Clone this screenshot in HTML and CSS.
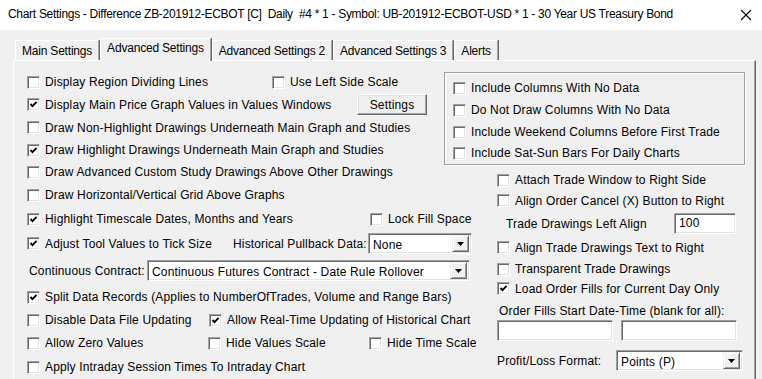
FILE: index.html
```html
<!DOCTYPE html>
<html lang="en">

<head>
  <meta charset="UTF-8">
  <title>Chart Settings</title>
  <link rel="stylesheet" href="styles.css">
</head>

<body>
  <div class="titlebar">
    <span class="titletext">Chart Settings - Difference ZB-201912-ECBOT [C]&nbsp; Daily&nbsp; #4 * 1 - Symbol: UB-201912-ECBOT-USD * 1 - 30 Year US Treasury Bond</span>
    <svg class="close" width="12" height="12" viewBox="0 0 12 12"><path d="M1 1 L11 11 M11 1 L1 11" stroke="#000" stroke-width="1.1" fill="none"/></svg>
  </div>

  <div class="tabs">
    <div class="tab">Main Settings</div>
    <div class="tab active">Advanced Settings</div>
    <div class="tab">Advanced Settings 2</div>
    <div class="tab">Advanced Settings 3</div>
    <div class="tab">Alerts</div>
  </div>

  <div class="panel">
    <!-- left column -->
    <div class="leftcol">
      <div class="row h22">
        <label class="chk w245"><span class="cb"></span>Display Region Dividing Lines</label>
        <label class="chk"><span class="cb"></span>Use Left Side Scale</label>
      </div>
      <div class="row h23">
        <label class="chk w330"><span class="cb"><svg viewBox="0 0 11 11"><path d="M2.5 5 L4.5 7.2 L8.6 2.8" /></svg></span>Display Main Price Graph Values in Values Windows</label>
        <div class="btn">Settings</div>
      </div>
      <div class="row h23">
        <label class="chk"><span class="cb"></span>Draw Non-Highlight Drawings Underneath Main Graph and Studies</label>
      </div>
      <div class="row h22">
        <label class="chk"><span class="cb"><svg viewBox="0 0 11 11"><path d="M2.5 5 L4.5 7.2 L8.6 2.8" /></svg></span>Draw Highlight Drawings Underneath Main Graph and Studies</label>
      </div>
      <div class="row h22">
        <label class="chk"><span class="cb"></span>Draw Advanced Custom Study Drawings Above Other Drawings</label>
      </div>
      <div class="row h24">
        <label class="chk"><span class="cb"></span>Draw Horizontal/Vertical Grid Above Graphs</label>
      </div>
      <div class="row h24">
        <label class="chk w343"><span class="cb"><svg viewBox="0 0 11 11"><path d="M2.5 5 L4.5 7.2 L8.6 2.8" /></svg></span>Highlight Timescale Dates, Months and Years</label>
        <label class="chk"><span class="cb"></span>Lock Fill Space</label>
      </div>
      <div class="row h25">
        <label class="chk w206"><span class="cb"><svg viewBox="0 0 11 11"><path d="M2.5 5 L4.5 7.2 L8.6 2.8" /></svg></span>Adjust Tool Values to Tick Size</label>
        <span class="lbl w135">Historical Pullback Data:</span>
        <div class="combo w104"><span class="val">None</span><span class="drop"><svg width="7" height="4" viewBox="0 0 7 4"><path d="M0 0 H7 L3.5 4 Z" fill="#000"/></svg></span></div>
      </div>
      <div class="row h29">
        <span class="lbl w120 pl2">Continuous Contract:</span>
        <div class="combo w323"><span class="val">Continuous Futures Contract - Date Rule Rollover</span><span class="drop"><svg width="7" height="4" viewBox="0 0 7 4"><path d="M0 0 H7 L3.5 4 Z" fill="#000"/></svg></span></div>
      </div>
      <div class="row h24">
        <label class="chk"><span class="cb"><svg viewBox="0 0 11 11"><path d="M2.5 5 L4.5 7.2 L8.6 2.8" /></svg></span>Split Data Records (Applies to NumberOfTrades, Volume and Range Bars)</label>
      </div>
      <div class="row h22">
        <label class="chk w182"><span class="cb"></span>Disable Data File Updating</label>
        <label class="chk"><span class="cb"><svg viewBox="0 0 11 11"><path d="M2.5 5 L4.5 7.2 L8.6 2.8" /></svg></span>Allow Real-Time Updating of Historical Chart</label>
      </div>
      <div class="row h24">
        <label class="chk w181"><span class="cb"></span>Allow Zero Values</label>
        <label class="chk w161"><span class="cb"></span>Hide Values Scale</label>
        <label class="chk"><span class="cb"></span>Hide Time Scale</label>
      </div>
      <div class="row h24">
        <label class="chk"><span class="cb"></span>Apply Intraday Session Times To Intraday Chart</label>
      </div>
    </div>

    <!-- right column -->
    <div class="rightcol">
      <div class="group">
        <label class="chk gr"><span class="cb"></span>Include Columns With No Data</label>
        <label class="chk gr"><span class="cb"></span>Do Not Draw Columns With No Data</label>
        <label class="chk gr"><span class="cb"></span>Include Weekend Columns Before First Trade</label>
        <label class="chk gr last"><span class="cb"></span>Include Sat-Sun Bars For Daily Charts</label>
      </div>

      <div class="trade">
        <div class="row h20">
          <label class="chk"><span class="cb"></span>Attach Trade Window to Right Side</label>
        </div>
        <div class="row h21">
          <label class="chk"><span class="cb"></span>Align Order Cancel (X) Button to Right</label>
        </div>
        <div class="row h25">
          <span class="lbl w177 pl9">Trade Drawings Left Align</span>
          <div class="field w62">100</div>
        </div>
        <div class="row h23">
          <label class="chk"><span class="cb"></span>Align Trade Drawings Text to Right</label>
        </div>
        <div class="row h20">
          <label class="chk"><span class="cb"></span>Transparent Trade Drawings</label>
        </div>
        <div class="row h19">
          <label class="chk"><span class="cb"><svg viewBox="0 0 11 11"><path d="M2.5 5 L4.5 7.2 L8.6 2.8" /></svg></span>Load Order Fills for Current Day Only</label>
        </div>
        <div class="caption">Order Fills Start Date-Time (blank for all):</div>
        <div class="fields">
          <div class="field w116"></div>
          <div class="field w116"></div>
        </div>
        <div class="row h21 pnl">
          <span class="lbl w119">Profit/Loss Format:</span>
          <div class="combo w127"><span class="val">Points (P)</span><span class="drop"><svg width="7" height="4" viewBox="0 0 7 4"><path d="M0 0 H7 L3.5 4 Z" fill="#000"/></svg></span></div>
        </div>
      </div>
    </div>
  </div>
</body>

</html>
```

FILE: styles.css
```css
body {
  margin: 0;
  background-color: #f0f0f0;
  font-family: "Liberation Sans", Arial, sans-serif;
  font-size: 12px;
  letter-spacing: 0.15px;
  color: #000;
  overflow: hidden;
}

.titlebar {
  height: 28px;
  background-color: #fff;
  display: flex;
  align-items: center;
  justify-content: space-between;
  padding: 0 10px 2px 8px;
}

.titletext {
  font-size: 12px;
  letter-spacing: -0.3px;
  white-space: nowrap;
}

.close {
  margin-top: 1px;
}

.tabs {
  display: flex;
  align-items: flex-end;
  margin-top: 7px;
  padding-left: 15px;
  height: 23px;
}

.tab {
  height: 20px;
  box-sizing: border-box;
  padding: 3px 6px 0 6px;
  border-top: 1px solid #fff;
  border-left: 1px solid #fff;
  border-right: 1px solid #a0a0a0;
  box-shadow: 1px 0 #696969;
  white-space: nowrap;
  letter-spacing: -0.2px;
  margin-right: 1px;
}

.tab.active {
  height: 23px;
  padding-top: 2px;
  margin-bottom: -1px;
  background-color: #f0f0f0;
  position: relative;
  z-index: 1;
}

.panel {
  margin-left: 13px;
  width: 743px;
  height: 321px;
  box-sizing: border-box;
  border-top: 1px solid #fff;
  border-left: 1px solid #fff;
  border-right: 1px solid #696969;
  box-shadow: inset -1px 0 #a0a0a0;
  display: flex;
  padding-left: 13px;
  overflow: hidden;
}

.leftcol {
  width: 417px;
  padding-top: 10px;
}

.rightcol {
  width: 301px;
  padding-top: 11px;
}

.row {
  display: flex;
  align-items: center;
  white-space: nowrap;
}

.h19 { height: 19px; }
.h20 { height: 20px; }
.h21 { height: 21px; }
.h22 { height: 22px; }
.h23 { height: 23px; }
.h24 { height: 24px; }
.h25 { height: 25px; }
.h29 { height: 29px; }

.chk {
  display: flex;
  align-items: center;
  white-space: nowrap;
  flex-shrink: 0;
}

.w62 { width: 62px; }
.w104 { width: 104px; }
.w116 { width: 116px; }
.w119 { width: 119px; }
.w120 { width: 120px; }
.w127 { width: 127px; }
.w135 { width: 135px; }
.w161 { width: 161px; }
.w177 { width: 177px; }
.w181 { width: 181px; }
.w182 { width: 182px; }
.w206 { width: 206px; }
.w245 { width: 245px; }
.w323 { width: 323px; }
.w330 { width: 330px; }
.w343 { width: 343px; }

.pl2 { padding-left: 2px; }
.pl9 { padding-left: 9px; }

.lbl {
  box-sizing: border-box;
  flex-shrink: 0;
}

.cb {
  width: 13px;
  height: 13px;
  box-sizing: border-box;
  background-color: #fff;
  border: 1px solid;
  border-color: #a0a0a0 #fff #fff #a0a0a0;
  box-shadow: inset 1px 1px #696969, inset -1px -1px #e3e3e3;
  margin-right: 5px;
  flex-shrink: 0;
  display: flex;
}

.cb svg {
  width: 11px;
  height: 11px;
}

.cb path {
  fill: none;
  stroke: #000;
  stroke-width: 1.9;
}

.btn {
  width: 70px;
  height: 21px;
  box-sizing: border-box;
  display: flex;
  align-items: center;
  justify-content: center;
  border: 1px solid;
  border-color: #fff #696969 #696969 #fff;
  box-shadow: inset -1px -1px #a0a0a0, inset 1px 1px #e3e3e3;
  background-color: #f0f0f0;
}

.combo {
  height: 21px;
  box-sizing: border-box;
  background-color: #fff;
  border: 1px solid;
  border-color: #a0a0a0 #fff #fff #a0a0a0;
  box-shadow: inset 1px 1px #696969, inset -1px -1px #e3e3e3;
  display: flex;
  align-items: center;
  justify-content: space-between;
  padding: 2px 2px 2px 4px;
  flex-shrink: 0;
}

.val {
  white-space: nowrap;
  overflow: hidden;
  padding-top: 2px;
}

.drop {
  width: 17px;
  height: 17px;
  box-sizing: border-box;
  background-color: #f0f0f0;
  border: 1px solid;
  border-color: #f0f0f0 #696969 #696969 #f0f0f0;
  box-shadow: inset 1px 1px #fff, inset -1px -1px #a0a0a0;
  display: flex;
  align-items: center;
  justify-content: center;
  flex-shrink: 0;
}

.field {
  height: 21px;
  box-sizing: border-box;
  background-color: #fff;
  border: 1px solid;
  border-color: #a0a0a0 #fff #fff #a0a0a0;
  box-shadow: inset 1px 1px #696969, inset -1px -1px #e3e3e3;
  padding: 2px 4px;
  line-height: 15px;
  flex-shrink: 0;
}

.group {
  height: 93px;
  box-sizing: border-box;
  border: 1px solid #a0a0a0;
  box-shadow: inset 1px 1px #fff, 1px 1px #fff;
  padding: 4px 0 0 8px;
}

.gr {
  height: 22px;
}

.gr.last {
  height: 20px;
}

.trade {
  padding-left: 53px;
  padding-top: 5px;
}

.caption {
  height: 21px;
  padding-top: 5px;
  box-sizing: border-box;
  padding-left: 2px;
  line-height: 16px;
  white-space: nowrap;
}

.fields {
  display: flex;
  gap: 8px;
  margin-top: 1px;
}

.pnl {
  margin-top: 9px;
}
```
